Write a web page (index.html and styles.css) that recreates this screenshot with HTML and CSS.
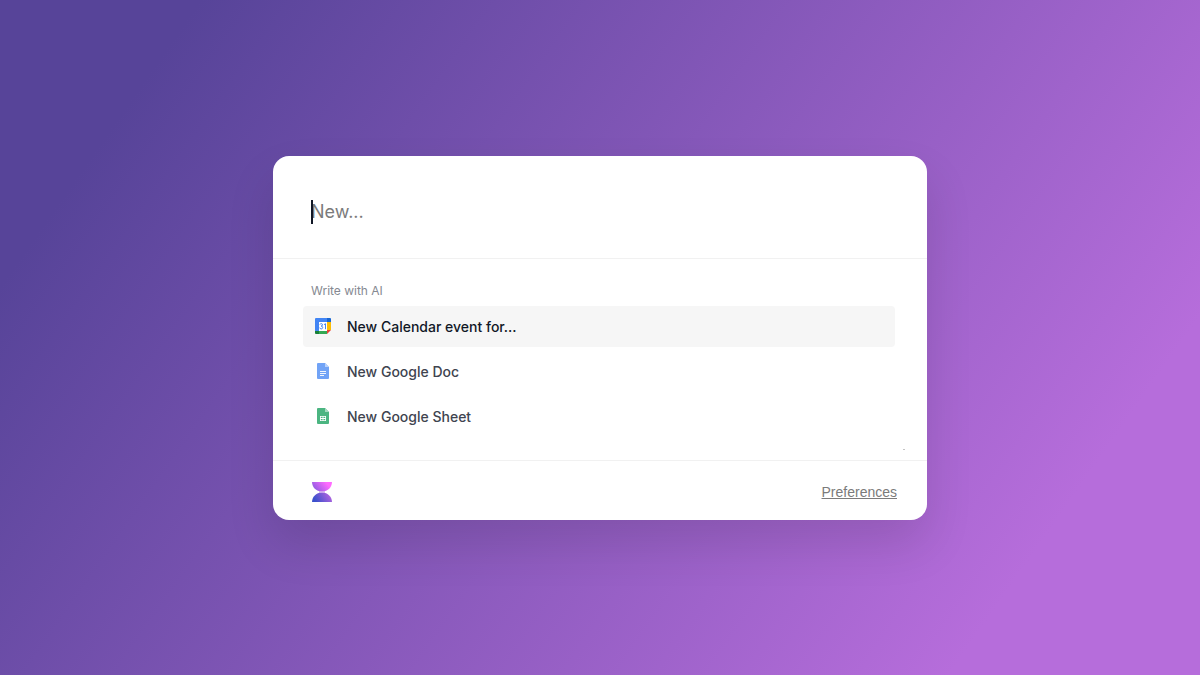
FILE: index.html
```html
<!DOCTYPE html>
<html lang="en">
<head>
    <meta charset="UTF-8">
    <meta name="viewport" content="width=device-width, initial-scale=1">
    <title>New</title>
    <link rel="stylesheet" href="styles.css">
</head>
<body>
    <main class="launcher">
        <div class="search">
            <span class="caret"></span>
            <input class="search-input" type="text" placeholder="New..." aria-label="New">
        </div>

        <section class="results">
            <h2 class="results-title">Write with AI</h2>
            <div class="results-list">
                <button class="item selected" type="button">
                    <svg class="icon" viewBox="0 0 18 18" aria-hidden="true">
                        <path fill="#fff" d="M4 4h10v10H4z"/>
                        <path fill="#4285f4" d="M2 1h12v4H5v9H1V2a1 1 0 0 1 1-1z"/>
                        <path fill="#1967d2" d="M13 1h3a1 1 0 0 1 1 1v3h-4z"/>
                        <path fill="#fbbc04" d="M13 5h4v8h-4z"/>
                        <path fill="#34a853" d="M5 14h8v3H5z"/>
                        <path fill="#188038" d="M1 14h4v3H2a1 1 0 0 1-1-1z"/>
                        <path fill="#ea4335" d="M13 13h4l-4 4z"/>
                        <path fill="none" stroke="#4285f4" d="M5.900 7.500c.4-1.300 2.700-1.100 2.600.3 0 .9-.7 1.300-1.400 1.300.9 0 1.600.5 1.600 1.400 0 1.800-2.700 1.900-3 .2M10 7.700l1.500-1v5.500"/>
                    </svg>
                    New Calendar event for...
                </button>
                <button class="item" type="button">
                    <svg class="icon faded" viewBox="0 0 18 18" aria-hidden="true">
                        <path fill="#4285f4" d="M4 1h7l4 4v11a1 1 0 0 1-1 1H4a1 1 0 0 1-1-1V2a1 1 0 0 1 1-1z"/>
                        <path fill="#a1c2fa" d="M11 1l4 4h-4z"/>
                        <path stroke="#fff" stroke-width=".9" d="M6 9.500h6M6 11.500h6M6 13.500h4"/>
                    </svg>
                    New Google Doc
                </button>
                <button class="item" type="button">
                    <svg class="icon faded" viewBox="0 0 18 18" aria-hidden="true">
                        <path fill="#0f9d58" d="M4 1h7l4 4v11a1 1 0 0 1-1 1H4a1 1 0 0 1-1-1V2a1 1 0 0 1 1-1z"/>
                        <path fill="#87ceac" d="M11 1l4 4h-4z"/>
                        <path fill="#fff" fill-rule="evenodd" d="M6 9h6v5H6zm.8.8v1.300h1.800V9.800zm2.600 0v1.300h1.800V9.800zm-2.600 2.100v1.300h1.800v-1.300zm2.600 0v1.300h1.800v-1.300z"/>
                    </svg>
                    New Google Sheet
                </button>
            </div>
            <span class="grip"></span>
        </section>

        <footer class="footer">
            <svg class="logo" viewBox="0 0 20 20" aria-hidden="true">
                <defs>
                    <linearGradient id="top" x1="0" y1=".6" x2="1" y2=".2">
                        <stop offset="0" stop-color="#8a5ce0"/>
                        <stop offset=".8" stop-color="#ff6bff"/>
                    </linearGradient>
                    <linearGradient id="bottom" x1="0" y1=".7" x2="1" y2=".4">
                        <stop offset=".1" stop-color="#3b50cc"/>
                        <stop offset="1" stop-color="#b464e0"/>
                    </linearGradient>
                </defs>
                <path fill="url(#top)" d="M0 0h20c0 5-4 9.500-10 9.500S0 5 0 0z"/>
                <path fill="url(#bottom)" d="M0 20h20c0-5-4-9.500-10-9.500S0 15 0 20z"/>
                <path fill="#c79be8" d="M7 9.300h6v1.400H7z"/>
            </svg>
            <a class="preferences" href="#">Preferences</a>
        </footer>
    </main>
</body>
</html>
```
FILE: styles.css
```css
* {
    box-sizing: border-box;
}

body {
    margin: 0;
    min-height: 100vh;
    display: flex;
    align-items: center;
    justify-content: center;
    font-family: Inter, "Liberation Sans", sans-serif;
    background: linear-gradient(125deg, #574499 12%, #b66ddb 85%);
}

.launcher {
    width: 100%;
    max-width: 654px;
    background: #fff;
    border-radius: 16px;
    box-shadow: 0 24px 48px rgba(0, 0, 0, 0.12);
}

.search {
    position: relative;
    padding: 42px 38px 32px;
    border-bottom: 1px solid #f1f1f1;
}

.search-input {
    display: block;
    width: 100%;
    height: 28px;
    padding: 0;
    border: none;
    outline: none;
    background: transparent;
    font-family: inherit;
    font-size: 18px;
    color: #111827;
}

.search-input::placeholder {
    color: #7b7b7b;
}

.caret {
    position: absolute;
    left: 38px;
    top: 44px;
    width: 2px;
    height: 24px;
    background: #111827;
}

.results {
    position: relative;
    padding: 24px 32px 23px 30px;
    border-bottom: 1px solid #f1f1f1;
}

.results-title {
    margin: 0 0 7px;
    padding-left: 8px;
    font-size: 12px;
    line-height: 16px;
    font-weight: 400;
    color: #858991;
}

.results-list {
    display: flex;
    flex-direction: column;
    gap: 4px;
}

.item {
    display: flex;
    align-items: center;
    gap: 15px;
    width: 100%;
    height: 41px;
    padding: 0 11px;
    border: none;
    border-radius: 4px;
    background: transparent;
    font-family: inherit;
    font-size: 14px;
    font-weight: 500;
    color: #40444f;
    text-align: left;
    cursor: pointer;
}

.item.selected {
    background: #f6f6f6;
    color: #111827;
}

.icon {
    width: 18px;
    height: 18px;
}

.icon.faded {
    opacity: 0.75;
}

.grip {
    position: absolute;
    right: 22px;
    bottom: 10px;
    width: 2px;
    height: 1px;
    background: #c4c4c4;
}

.footer {
    display: flex;
    align-items: center;
    justify-content: space-between;
    padding: 21px 30px 18px 39px;
}

.logo {
    width: 20px;
    height: 20px;
}

.preferences {
    font-family: "Liberation Sans", Arial, sans-serif;
    font-size: 14px;
    line-height: 20px;
    color: #7b7b7b;
    text-underline-offset: 1px;
}
```
